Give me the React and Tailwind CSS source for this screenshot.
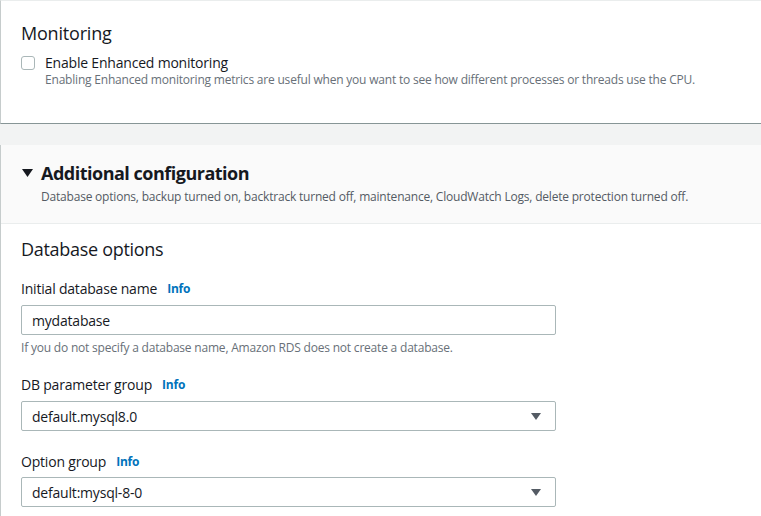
export default function App() {
  return (
    <div className="w-[761px] h-[516px] overflow-hidden bg-[#f2f3f3] text-[#16191f] font-['Open_Sans',sans-serif]">
      {/* Monitoring card */}
      <div className="bg-white border-t border-t-[#eaeded] border-l border-l-[#c6cccc] border-b border-b-[#879596] pt-[21px] pb-[35px] px-[20px]">
        <h2 className="text-[18px] leading-[22px] tracking-[-0.2px]">Monitoring</h2>
        <div className="flex mt-[10px]">
          <div className="w-[14px] h-[14px] mt-[2px] border border-[#aab7b8] rounded-[3px] bg-white shrink-0"></div>
          <div className="ml-[10px]">
            <div className="text-[14px] leading-[18px] tracking-[-0.2px]">Enable Enhanced monitoring</div>
            <div className="text-[12px] leading-[16px] text-[#687078] tracking-[-0.2px]">
              Enabling Enhanced monitoring metrics are useful when you want to see how different processes or threads use the CPU.
            </div>
          </div>
        </div>
      </div>

      {/* Additional configuration card */}
      <div className="mt-[21px] bg-white border-l border-l-[#c6cccc]">
        <div className="bg-[#fafafa] border-b border-b-[#eaeded] pt-[17px] pb-[18px] px-[20px]">
          <div className="flex items-center">
            <svg width="11" height="8" viewBox="0 0 11 8" className="ml-[1px] mr-[8px]">
              <polygon points="0,0 11,0 5.5,8" fill="#16191f" />
            </svg>
            <h2 className="text-[18px] leading-[22px] font-bold tracking-[-0.5px]">Additional configuration</h2>
          </div>
          <div className="mt-[5px] pl-[20px] text-[12px] leading-[16px] text-[#545b64] tracking-[-0.2px]">
            Database options, backup turned on, backtrack turned off, maintenance, CloudWatch Logs, delete protection turned off.
          </div>
        </div>
        <div className="px-[20px] pt-[14px] pb-[20px]">
          <h3 className="text-[18px] leading-[22px] tracking-[-0.3px]">Database options</h3>

          <div className="mt-[19px] h-[20px] text-[14px] leading-[20px] flex items-center tracking-[-0.2px]">
            <span>Initial database name</span>
            <span className="ml-[10px] text-[12px] leading-[20px] font-bold text-[#0073bb]">Info</span>
          </div>
          <div className="mt-[6px] w-[535px] h-[30px] border border-[#aab7b8] rounded-[2px] bg-white flex items-center px-[10px] text-[14px] tracking-[-0.2px]">
            mydatabase
          </div>
          <div className="mt-[5px] text-[12px] leading-[16px] text-[#687078] tracking-[-0.2px]">
            If you do not specify a database name, Amazon RDS does not create a database.
          </div>

          <div className="mt-[19px] h-[20px] text-[14px] leading-[20px] flex items-center tracking-[-0.2px]">
            <span>DB parameter group</span>
            <span className="ml-[10px] text-[12px] leading-[20px] font-bold text-[#0073bb]">Info</span>
          </div>
          <div className="mt-[6px] w-[535px] h-[30px] border border-[#aab7b8] rounded-[2px] bg-white flex items-center justify-between pl-[10px] pr-[14px] text-[14px] tracking-[-0.2px]">
            <span>default.mysql8.0</span>
            <svg width="10" height="7" viewBox="0 0 10 7">
              <polygon points="0,0 10,0 5,7" fill="#545b64" />
            </svg>
          </div>

          <div className="mt-[21px] h-[20px] text-[14px] leading-[20px] flex items-center tracking-[-0.2px]">
            <span>Option group</span>
            <span className="ml-[10px] text-[12px] leading-[20px] font-bold text-[#0073bb]">Info</span>
          </div>
          <div className="mt-[5px] w-[535px] h-[30px] border border-[#aab7b8] rounded-[2px] bg-white flex items-center justify-between pl-[10px] pr-[14px] text-[14px] tracking-[-0.2px]">
            <span>default:mysql-8-0</span>
            <svg width="10" height="7" viewBox="0 0 10 7">
              <polygon points="0,0 10,0 5,7" fill="#545b64" />
            </svg>
          </div>
        </div>
      </div>
    </div>
  );
}
